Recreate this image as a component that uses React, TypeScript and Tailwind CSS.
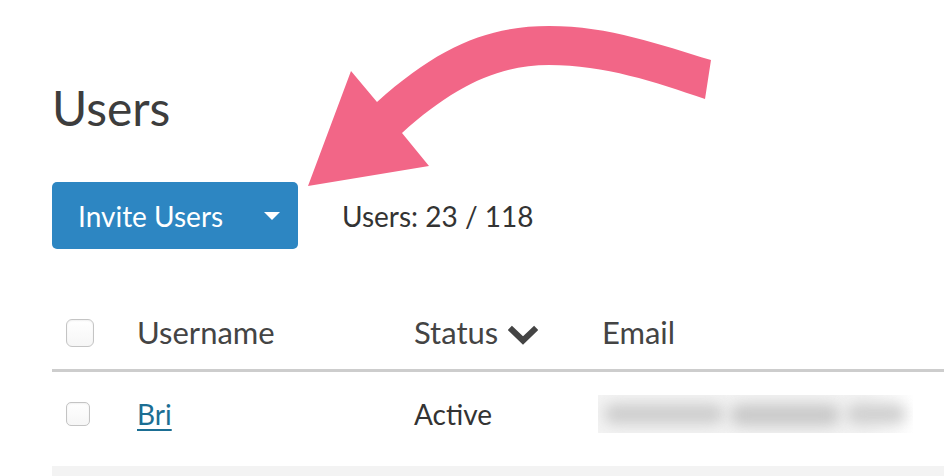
function Checkbox({ size }: { size: "lg" | "sm" }) {
  return (
    <span
      className={`block border border-[#c4c4c4] bg-gradient-to-b from-white to-[#f6f6f6] shadow-[inset_0_1px_2px_rgba(0,0,0,0.06)] ${
        size === "lg" ? "w-[28px] h-[28px] rounded-[6px]" : "w-[24px] h-[24px] rounded-[5px]"
      }`}
    />
  );
}

function Arrow() {
  return (
    <svg
      className="absolute left-0 top-0 pointer-events-none"
      width="944"
      height="476"
      viewBox="0 0 944 476"
    >
      <path
        d="M711,60 C660,45 610,26 549,26 C490,26 440,45 377,102 L351,71 L308,186 L429,166 L402,133 C455,85 500,65 549,65 C605,65 655,82 705,99 Z"
        fill="#f26687"
      />
    </svg>
  );
}

function Chevron() {
  return (
    <svg width="30" height="20" viewBox="0 0 30 20" className="ml-[10px] mt-[4px]">
      <path d="M4,5 L15,15.5 L26,5" fill="none" stroke="#444" strokeWidth="6" strokeLinecap="square" />
    </svg>
  );
}

export default function App() {
  return (
    <div className="relative w-[944px] h-[476px] overflow-hidden bg-white font-['Lato',sans-serif] text-[#3d3d3d]">
      <div className="pl-[52px] pt-[84px]">
        <h1 className="text-[48px] leading-none font-normal">Users</h1>

        <div className="mt-[50px] flex items-center">
          <button className="w-[246px] h-[67px] rounded-[5px] bg-[#2d86c2] text-white text-[28px] flex items-center pl-[26px] pr-[18px]">
            <span>Invite Users</span>
            <span className="ml-auto w-0 h-0 border-l-[8px] border-r-[8px] border-t-[8px] border-l-transparent border-r-transparent border-t-white" />
          </button>
          <span className="ml-[44px] text-[28px] text-[#333]">Users: 23 / 118</span>
        </div>

        <div className="mt-[47px]">
          <div className="flex items-center h-[76px] text-[31px] text-[#444] border-b-[3px] border-[#cdcdcd]">
            <div className="w-[85px] pl-[14px]">
              <Checkbox size="lg" />
            </div>
            <div className="w-[277px]">Username</div>
            <div className="w-[188px] flex items-center">
              <span>Status</span>
              <Chevron />
            </div>
            <div>Email</div>
          </div>

          <div className="flex items-center h-[84px] text-[28px] text-[#333]">
            <div className="w-[85px] pl-[14px]">
              <Checkbox size="sm" />
            </div>
            <div className="w-[277px]">
              <a href="#" className="text-[#1b6e93] underline underline-offset-4 decoration-2">
                Bri
              </a>
            </div>
            <div className="w-[184px]">Active</div>
            <div className="w-[315px] h-[38px] overflow-hidden bg-gradient-to-r from-[#f3f3f3] via-[#f3f3f3] via-85% to-white">
              <div className="flex gap-[6px] px-[6px] pt-[9px]">
                <div className="w-[120px] h-[20px] rounded-full bg-[#cdcdcd] blur-[7px]" />
                <div className="w-[110px] h-[22px] rounded-full bg-[#c9c9c9] blur-[7px]" />
                <div className="w-[60px] h-[20px] rounded-full bg-[#cfcfcf] blur-[7px]" />
              </div>
            </div>
          </div>

          <div className="mt-[10px] h-[20px] bg-[#f3f3f3]" />
        </div>
      </div>
      <Arrow />
    </div>
  );
}
